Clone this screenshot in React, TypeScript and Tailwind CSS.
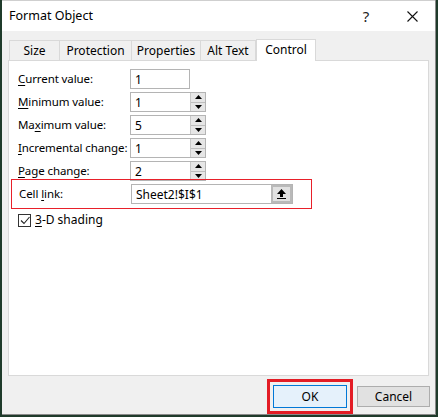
import React from "react";

const font = { fontFamily: '"Noto Sans", "Segoe UI", sans-serif' };

function Spinner() {
  return (
    <div className="flex flex-col w-[15px] h-[18px] border-l border-[#c8c8c8] bg-[#e6e6e6]">
      <div className="flex-1 flex items-center justify-center border-b border-[#bdbdbd]">
        <svg width="7" height="4" viewBox="0 0 7 4"><path d="M3.5 0 L7 4 L0 4 Z" fill="#000" /></svg>
      </div>
      <div className="flex-1 flex items-center justify-center">
        <svg width="7" height="4" viewBox="0 0 7 4"><path d="M0 0 L7 0 L3.5 4 Z" fill="#000" /></svg>
      </div>
    </div>
  );
}

function Label({ pre, u, post }: { pre: string; u: string; post: string }) {
  return (
    <span className="w-[112px] shrink-0 whitespace-nowrap text-[11.5px] tracking-[-0.1px] text-black">
      {pre}
      <span className="underline underline-offset-2">{u}</span>
      {post}
    </span>
  );
}

function Row({ pre, u, post, value, spin }: { pre: string; u: string; post: string; value: string; spin?: boolean }) {
  return (
    <div className="flex items-center h-[20px]">
      <Label pre={pre} u={u} post={post} />
      <div className={`flex items-center h-[20px] border border-[#b4b4b4] bg-white ${spin ? "w-[76px]" : "w-[60px]"}`}>
        <span className="flex-1 pl-[4px] text-[12px] leading-none pt-[2px]">{value}</span>
        {spin && <Spinner />}
      </div>
    </div>
  );
}

export default function App() {
  return (
    <div className="w-[438px] h-[417px] bg-[#1f3b2b] flex" style={font}>
      <div className="ml-[2px] w-[434px] h-[415px] flex flex-col bg-[#f0f0f0] border-r border-b border-[#8a8a8a]">
        <div className="h-[31px] bg-white flex items-center border-t border-[#cfcfcf]">
          <span className="pl-[7px] text-[12.5px] text-black flex-1">Format Object</span>
          <span className="w-[46px] text-center text-[15px] text-[#222]">?</span>
          <span className="w-[46px] flex justify-center">
            <svg width="11" height="11" viewBox="0 0 11 11"><path d="M0.5 0.5 L10.5 10.5 M10.5 0.5 L0.5 10.5" stroke="#111" strokeWidth="1.1" /></svg>
          </span>
        </div>
        <div className="flex flex-col px-[6px] pt-[7px]">
          <div className="flex items-end h-[22px] pl-[1px]">
            <div className="h-[20px] w-[51px] border border-b-0 border-[#d9d9d9] flex items-center justify-center text-[12px]">Size</div>
            <div className="h-[20px] w-[72px] border border-b-0 border-l-0 border-[#d9d9d9] flex items-center justify-center text-[12px]">Protection</div>
            <div className="h-[20px] w-[69px] border border-b-0 border-l-0 border-[#d9d9d9] flex items-center justify-center text-[12px]">Properties</div>
            <div className="h-[20px] w-[55px] border border-b-0 border-l-0 border-[#d9d9d9] flex items-center justify-center text-[12px]">Alt Text</div>
            <div className="h-[22px] w-[60px] border border-b-0 border-[#d9d9d9] bg-white flex items-center justify-center text-[12px] pb-[2px] -mb-px relative z-10">Control</div>
          </div>
          <div className="h-[316px] w-[421px] bg-white border border-[#d9d9d9] flex flex-col pt-[8px]">
            <div className="flex flex-col gap-[3px] pl-[9px]">
              <Row pre="" u="C" post="urrent value:" value="1" />
              <Row pre="" u="M" post="inimum value:" value="1" spin />
              <Row pre="Ma" u="x" post="imum value:" value="5" spin />
              <Row pre="" u="I" post="ncremental change:" value="1" spin />
              <Row pre="" u="P" post="age change:" value="2" spin />
            </div>
            <div className="ml-[2px] mt-[-2px] w-[301px] h-[30px] border border-[#e8202a] flex items-center pl-[7px]">
              <Label pre="Cell " u="l" post="ink:" />
              <div className="flex items-center h-[20px] w-[162px] border border-[#b4b4b4] bg-white">
                <span className="flex-1 pl-[4px] text-[12px] leading-none pt-[2px]">Sheet2!$I$1</span>
                <div className="w-[21px] h-[18px] bg-[#e1e1e1] border-[2px] border-[#b9b9b9] flex items-center justify-center">
                  <svg width="9" height="10" viewBox="0 0 9 10"><path d="M4.5 0 L9 5 L6 5 L6 8 L3 8 L3 5 L0 5 Z" fill="#000" /><rect x="0" y="9" width="9" height="1" fill="#000" /></svg>
                </div>
              </div>
            </div>
            <div className="flex items-center pl-[9px] mt-[4px] h-[14px]">
              <div className="w-[13px] h-[13px] border border-[#333] flex items-center justify-center bg-white">
                <svg width="10" height="9" viewBox="0 0 10 9"><path d="M1 4.5 L4 7.5 L9.5 1" stroke="#222" strokeWidth="1.1" fill="none" /></svg>
              </div>
              <span className="ml-[4px] text-[12px] whitespace-nowrap"><span className="underline underline-offset-2">3</span>-D shading</span>
            </div>
          </div>
        </div>
        <div className="flex justify-end items-center pr-[5px] pt-[3px] gap-[4px]">
          <div className="w-[86px] h-[35px] border-[3px] border-[#e31c25] flex items-center justify-center">
            <div className="w-[74px] h-[23px] border border-[#0078d7] bg-[#e5f1fb] flex items-center justify-center text-[12px]">OK</div>
          </div>
          <div className="w-[73px] h-[21px] border border-[#adadad] bg-[#e1e1e1] flex items-center justify-center text-[12px]">Cancel</div>
        </div>
      </div>
    </div>
  );
}
